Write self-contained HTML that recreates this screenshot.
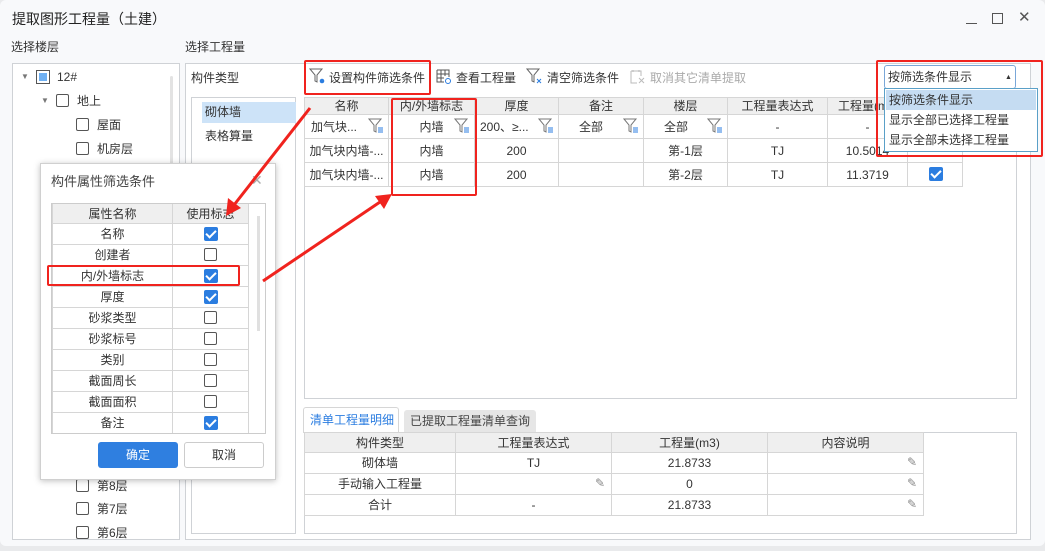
<!DOCTYPE html>
<html><head><meta charset="utf-8"><style>
*{margin:0;padding:0;box-sizing:border-box}
body{width:1045px;height:551px;overflow:hidden;background:#e9eaec;font-family:"Liberation Sans","Noto Sans CJK SC",sans-serif;font-size:12px;color:#333;position:relative}
.a{position:absolute}
.win{left:0;top:0;width:1045px;height:546px;background:#f8f9fb;border-radius:6px}
.box{position:absolute;border:1px solid #cfd2d6;background:#fff}
.t{position:absolute;white-space:nowrap;line-height:16px}
.cb{position:absolute;width:13px;height:13px;border:1px solid #555;border-radius:2px;background:#fff}
.ck{position:absolute;width:14px;height:14px;border-radius:2px;background:#2b7de0}
.ck:after{content:"";position:absolute;left:4px;top:1px;width:4px;height:8px;border:solid #fff;border-width:0 2px 2px 0;transform:rotate(45deg)}
.red{position:absolute;border:2.5px solid #f0231e;border-radius:2px}
table{border-collapse:collapse;position:absolute;table-layout:fixed}
td{border:1px solid #d6d6d6;text-align:center;padding:0;font-size:12px;line-height:14px;white-space:nowrap;overflow:hidden;position:relative}
.big td{height:24px}
.sm td{height:21px}
.hd td{background:#efefef;height:17px}
.hd2 td{background:#efefef;height:20px}
.fl{position:absolute;right:4px;top:3px}
.pen{position:absolute;right:6px;top:2px;color:#888}
</style></head><body>
<div class="a win"></div>
<div class="t" style="left:12px;top:11px;font-size:14px;color:#222">提取图形工程量（土建）</div>
<div class="a" style="left:966px;top:23px;width:11px;height:1px;background:#555"></div>
<div class="a" style="left:992px;top:13px;width:11px;height:11px;border:1px solid #555"></div>
<div class="t" style="left:1018px;top:10px;font-size:15px;color:#555">✕</div>

<div class="t" style="left:11px;top:39px">选择楼层</div>
<div class="t" style="left:185px;top:39px">选择工程量</div>

<!-- tree -->
<div class="box" style="left:12px;top:63px;width:168px;height:477px"></div>
<div class="a" style="left:170px;top:76px;width:3px;height:160px;background:#e3e3e3;border-radius:2px"></div>
<div class="t" style="left:21px;top:69px;font-size:8px;color:#777">▼</div>
<div class="a" style="left:36px;top:70px;width:14px;height:14px;border:1px solid #555;background:#fff"><div style="margin:2px;width:8px;height:8px;background:#6fb0f2"></div></div>
<div class="t" style="left:57px;top:69px">12#</div>
<div class="t" style="left:41px;top:93px;font-size:8px;color:#777">▼</div>
<div class="cb" style="left:56px;top:94px"></div><div class="t" style="left:77px;top:93px">地上</div>
<div class="cb" style="left:76px;top:118px"></div><div class="t" style="left:97px;top:117px">屋面</div>
<div class="cb" style="left:76px;top:142px"></div><div class="t" style="left:97px;top:141px">机房层</div>
<div class="cb" style="left:76px;top:479px"></div><div class="t" style="left:97px;top:478px">第8层</div>
<div class="cb" style="left:76px;top:502px"></div><div class="t" style="left:97px;top:501px">第7层</div>
<div class="cb" style="left:76px;top:526px"></div><div class="t" style="left:97px;top:525px">第6层</div>

<!-- main -->
<div class="box" style="left:185px;top:63px;width:846px;height:477px;background:#fff"></div>
<div class="t" style="left:191px;top:70px">构件类型</div>
<div class="box" style="left:191px;top:97px;width:105px;height:437px"></div>
<div class="a" style="left:202px;top:102px;width:94px;height:21px;background:#cde3f8"></div>
<div class="t" style="left:205px;top:104px">砌体墙</div>
<div class="t" style="left:205px;top:128px">表格算量</div>

<!-- toolbar -->
<svg class="a" style="left:309px;top:68px" width="16" height="16" viewBox="0 0 16 16"><path d="M1 1h12l-5 6v7l-2-1v-6z" fill="none" stroke="#666"/><circle cx="13" cy="13" r="2.3" fill="#2b7de0"/></svg>
<div class="t" style="left:329px;top:70px">设置构件筛选条件</div>
<svg class="a" style="left:436px;top:69px" width="16" height="16" viewBox="0 0 16 16"><path d="M1 1h12v7M1 1v12h7M1 5h12M1 9h7M5 1v12M9 1v6" fill="none" stroke="#555"/><circle cx="12" cy="12" r="2.5" fill="none" stroke="#2b7de0"/></svg>
<div class="t" style="left:456px;top:70px">查看工程量</div>
<svg class="a" style="left:526px;top:68px" width="16" height="16" viewBox="0 0 16 16"><path d="M1 1h12l-5 6v7l-2-1v-6z" fill="none" stroke="#666"/><path d="M11 11l4 4M15 11l-4 4" stroke="#2b7de0"/></svg>
<div class="t" style="left:547px;top:70px">清空筛选条件</div>
<svg class="a" style="left:630px;top:69px" width="15" height="15" viewBox="0 0 15 15"><path d="M1 2h10v5M1 2v12h6M3 1v2M9 1v2M9 9l5 5M14 9l-5 5" fill="none" stroke="#bbb"/></svg>
<div class="t" style="left:650px;top:70px;color:#aaa">取消其它清单提取</div>

<!-- top table -->
<div class="box" style="left:304px;top:97px;width:713px;height:302px"></div>
<table style="left:304px;top:97px;width:658px">
<colgroup><col style="width:84px"><col style="width:86px"><col style="width:84px"><col style="width:85px"><col style="width:84px"><col style="width:100px"><col style="width:80px"><col style="width:55px"></colgroup>
<tr class="hd"><td>名称</td><td>内/外墙标志</td><td>厚度</td><td>备注</td><td>楼层</td><td>工程量表达式</td><td style="text-align:left;padding-left:10px">工程量(m</td><td></td></tr>
<tr class="big"><td style="text-align:left;padding-left:6px">加气块...<svg class="fl" width="16" height="16" viewBox="0 0 16 16"><path d="M1 1h12l-5 6v7l-2-1v-6z" fill="none" stroke="#777"/><path d="M10 10h5M10 12h5M10 14h5" stroke="#2b7de0"/></svg></td><td>内墙<svg class="fl" width="16" height="16" viewBox="0 0 16 16"><path d="M1 1h12l-5 6v7l-2-1v-6z" fill="none" stroke="#777"/><path d="M10 10h5M10 12h5M10 14h5" stroke="#2b7de0"/></svg></td><td style="text-align:left;padding-left:5px">200、≥...<svg class="fl" width="16" height="16" viewBox="0 0 16 16"><path d="M1 1h12l-5 6v7l-2-1v-6z" fill="none" stroke="#777"/><path d="M10 10h5M10 12h5M10 14h5" stroke="#2b7de0"/></svg></td><td style="text-align:left;padding-left:20px">全部<svg class="fl" width="16" height="16" viewBox="0 0 16 16"><path d="M1 1h12l-5 6v7l-2-1v-6z" fill="none" stroke="#777"/><path d="M10 10h5M10 12h5M10 14h5" stroke="#2b7de0"/></svg></td><td style="text-align:left;padding-left:20px">全部<svg class="fl" width="16" height="16" viewBox="0 0 16 16"><path d="M1 1h12l-5 6v7l-2-1v-6z" fill="none" stroke="#777"/><path d="M10 10h5M10 12h5M10 14h5" stroke="#2b7de0"/></svg></td><td>-</td><td>-</td><td></td></tr>
<tr class="big"><td>加气块内墙-...</td><td>内墙</td><td>200</td><td></td><td>第-1层</td><td>TJ</td><td>10.5014</td><td></td></tr>
<tr class="big"><td>加气块内墙-...</td><td>内墙</td><td>200</td><td></td><td>第-2层</td><td>TJ</td><td>11.3719</td><td></td></tr>
</table>
<div class="ck" style="left:929px;top:167px"></div>

<!-- dropdown -->
<div class="a" style="left:884px;top:65px;width:132px;height:24px;border:1px solid #7aa7d8;border-radius:3px;background:#fff"></div>
<div class="t" style="left:888px;top:69px">按筛选条件显示</div>
<div class="t" style="left:1005px;top:70px;font-size:7px">▲</div>
<div class="a" style="left:884px;top:88px;width:154px;height:64px;border:1px solid #5aa0c8;background:#fff"></div>
<div class="a" style="left:886px;top:90px;width:150px;height:20px;background:#c5dcf2"></div>
<div class="t" style="left:889px;top:92px">按筛选条件显示</div>
<div class="t" style="left:889px;top:112px">显示全部已选择工程量</div>
<div class="t" style="left:889px;top:132px">显示全部未选择工程量</div>

<!-- bottom -->
<div class="a" style="left:303px;top:407px;width:96px;height:26px;background:#fff;border:1px solid #d6d6d6;border-bottom:none;border-radius:3px 3px 0 0"></div>
<div class="t" style="left:310px;top:412px;color:#2b7de0;font-size:12px">清单工程量明细</div>
<div class="a" style="left:404px;top:410px;width:132px;height:22px;background:#e6e6e6;border-radius:3px 3px 0 0"></div>
<div class="t" style="left:410px;top:413px;font-size:12px;color:#444">已提取工程量清单查询</div>
<div class="box" style="left:304px;top:432px;width:713px;height:102px"></div>
<table style="left:304px;top:432px;width:619px">
<colgroup><col style="width:151px"><col style="width:156px"><col style="width:156px"><col style="width:156px"></colgroup>
<tr class="hd2"><td>构件类型</td><td>工程量表达式</td><td>工程量(m3)</td><td>内容说明</td></tr>
<tr class="sm"><td>砌体墙</td><td>TJ</td><td>21.8733</td><td><span class="pen">✎</span></td></tr>
<tr class="sm"><td>手动输入工程量</td><td><span class="pen">✎</span></td><td>0</td><td><span class="pen">✎</span></td></tr>
<tr class="sm"><td>合计</td><td>-</td><td>21.8733</td><td><span class="pen">✎</span></td></tr>
</table>

<!-- dialog -->
<div class="a" style="left:40px;top:163px;width:236px;height:317px;background:#fff;border:1px solid #d0d0d0;box-shadow:0 1px 6px rgba(0,0,0,.25)"></div>
<div class="t" style="left:51px;top:174px;font-size:13px;color:#444">构件属性筛选条件</div>
<div class="t" style="left:251px;top:172px;font-size:14px;color:#aaa">✕</div>
<div class="a" style="left:51px;top:203px;width:215px;height:231px;border:1px solid #ccc;overflow:hidden">
<table style="left:0;top:-1px;width:196px">
<colgroup><col style="width:120px"><col style="width:76px"></colgroup>
<tr class="hd2"><td>属性名称</td><td>使用标志</td></tr>
<tr class="sm"><td>名称</td><td><div class="ck" style="left:31px;top:3px"></div></td></tr>
<tr class="sm"><td>创建者</td><td><div class="cb" style="left:31px;top:3px"></div></td></tr>
<tr class="sm"><td>内/外墙标志</td><td><div class="ck" style="left:31px;top:3px"></div></td></tr>
<tr class="sm"><td>厚度</td><td><div class="ck" style="left:31px;top:3px"></div></td></tr>
<tr class="sm"><td>砂浆类型</td><td><div class="cb" style="left:31px;top:3px"></div></td></tr>
<tr class="sm"><td>砂浆标号</td><td><div class="cb" style="left:31px;top:3px"></div></td></tr>
<tr class="sm"><td>类别</td><td><div class="cb" style="left:31px;top:3px"></div></td></tr>
<tr class="sm"><td>截面周长</td><td><div class="cb" style="left:31px;top:3px"></div></td></tr>
<tr class="sm"><td>截面面积</td><td><div class="cb" style="left:31px;top:3px"></div></td></tr>
<tr class="sm"><td>备注</td><td><div class="ck" style="left:31px;top:3px"></div></td></tr>
</table>
<div class="a" style="left:205px;top:12px;width:3px;height:115px;background:#e0e0e0"></div>
</div>
<div class="a" style="left:98px;top:442px;width:80px;height:26px;background:#2f7fe0;border-radius:3px;color:#fff;text-align:center;line-height:26px">确定</div>
<div class="a" style="left:184px;top:442px;width:80px;height:26px;background:#fff;border:1px solid #ccc;border-radius:3px;text-align:center;line-height:24px">取消</div>

<!-- red annotations -->
<div class="red" style="left:304px;top:60px;width:127px;height:35px"></div>
<div class="red" style="left:391px;top:98px;width:86px;height:98px"></div>
<div class="red" style="left:876px;top:60px;width:167px;height:97px"></div>
<div class="red" style="left:47px;top:265px;width:193px;height:21px"></div>
<svg class="a" style="left:0;top:0" width="1045" height="551">
<line x1="310" y1="108" x2="234" y2="205" stroke="#f0231e" stroke-width="3"/>
<polygon points="226,216 228,198 241,208" fill="#f0231e"/>
<line x1="263" y1="281" x2="380" y2="202" stroke="#f0231e" stroke-width="3"/>
<polygon points="392,194 375,196 384,209" fill="#f0231e"/>
</svg>
</body></html>
